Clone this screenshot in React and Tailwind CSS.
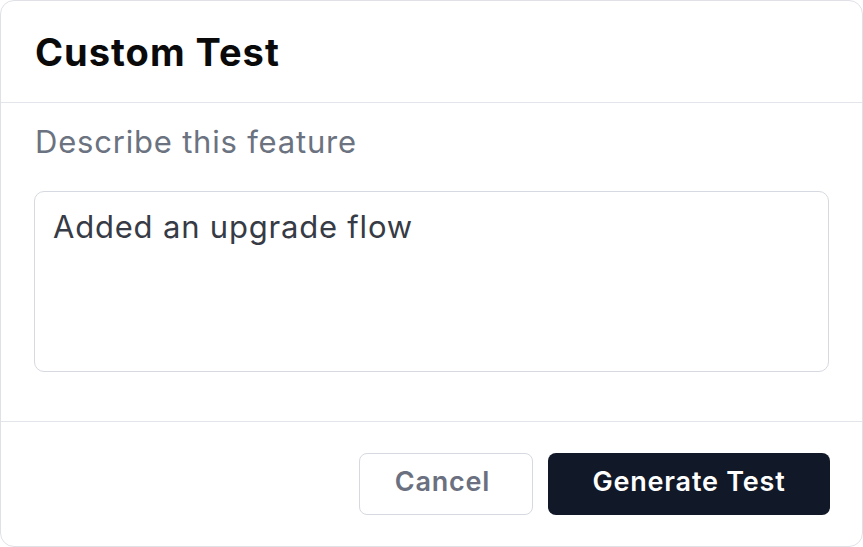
import { useState } from 'react';

const App = () => {
  const [feature, setFeature] = useState('Added an upgrade flow');

  return (
    <div className="w-[863px] h-[547px] bg-white" style={{ fontFamily: 'Inter, "Noto Sans", sans-serif' }}>
      <div className="h-full flex flex-col border border-[#dfe1e7] rounded-[14px] overflow-hidden">
        {/* Header */}
        <div className="h-[102px] shrink-0 flex items-center px-[34px] pt-[2px] border-b border-[#e2e5ea]">
          <h2 className="text-[38px] font-bold text-[#0a0a0a] tracking-[1px]">Custom Test</h2>
        </div>

        {/* Body */}
        <div className="px-[33px] pt-[18px] pb-[49px] border-b border-[#e2e5ea]">
          <label className="block text-[31px] leading-[42px] tracking-[0.8px] text-[#6b7280] pl-[1px]">
            Describe this feature
          </label>
          <textarea
            value={feature}
            onChange={(e) => setFeature(e.target.value)}
            className="mt-[28px] block w-full h-[181px] resize-none rounded-[10px] border border-[#d6d9df] px-[18px] py-[15px] text-[31px] leading-[40px] tracking-[0.8px] text-[#363b45] outline-none"
          />
        </div>

        {/* Footer */}
        <div className="flex-1 flex items-center justify-end gap-[15px] px-[32px]">
          <button className="w-[174px] h-[62px] pb-[4px] pr-[7px] rounded-[8px] border border-[#d6d9df] bg-white text-[27px] font-semibold tracking-[0.8px] text-[#6b7080]">
            Cancel
          </button>
          <button className="w-[282px] h-[62px] pb-[4px] rounded-[8px] bg-[#111827] text-[27px] font-semibold tracking-[0.8px] text-white">
            Generate Test
          </button>
        </div>
      </div>
    </div>
  );
};

export default App;
